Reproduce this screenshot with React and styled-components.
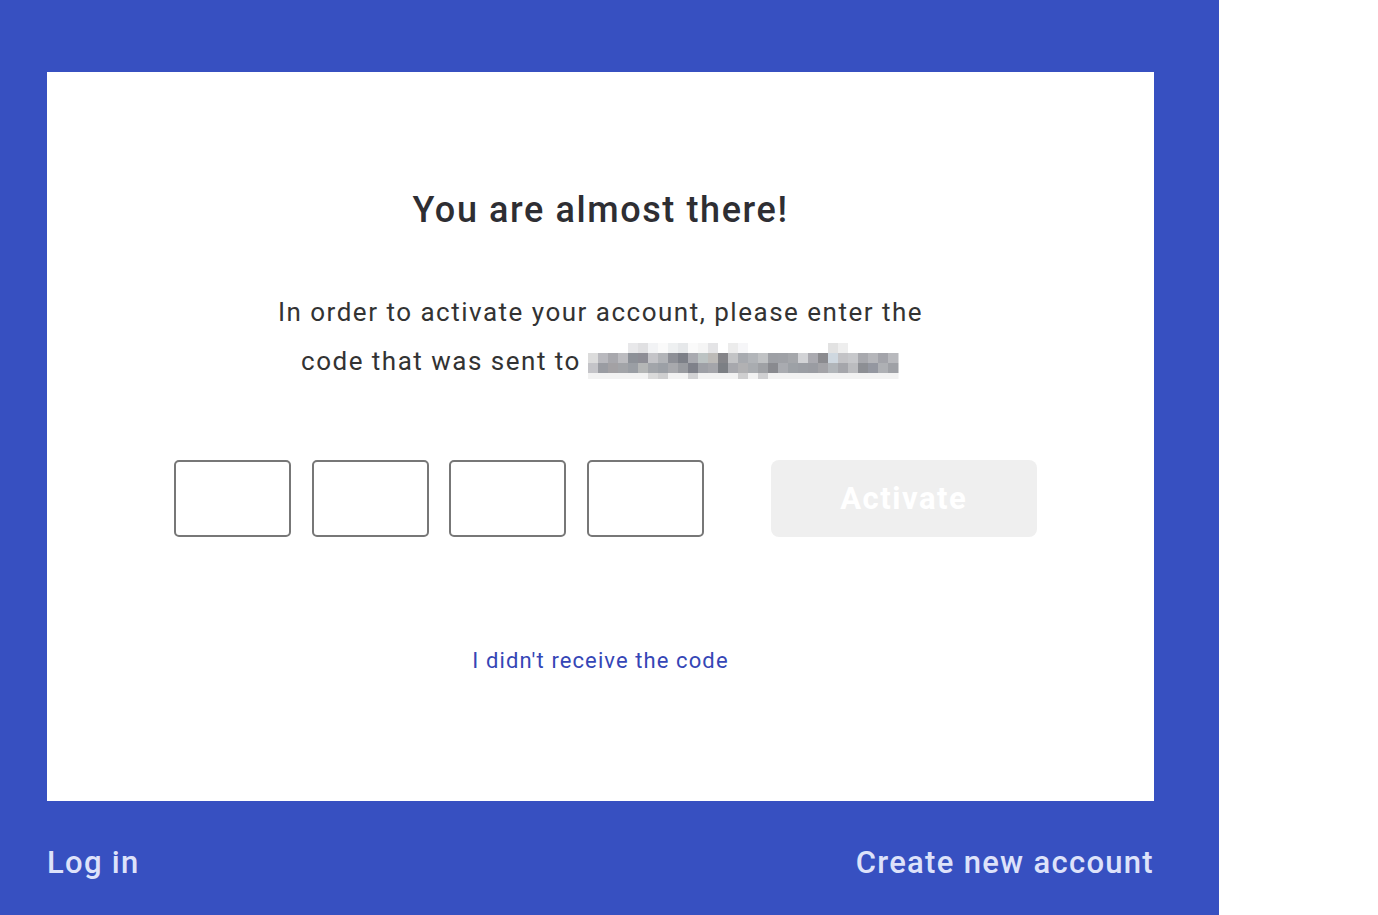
import styled, { createGlobalStyle } from "styled-components";

const GlobalStyle = createGlobalStyle`
  body {
    margin: 0;
    background: #ffffff;
    font-family: Roboto, "Liberation Sans", sans-serif;
  }
`;

const Page = styled.div`
  display: flex;
  width: 100vw;
  height: 100vh;
  background: #ffffff;
`;

const Panel = styled.div`
  width: 1219px;
  height: 915px;
  box-sizing: border-box;
  padding: 72px 65px 0 47px;
  background: #3750c1;
  display: flex;
  flex-direction: column;
`;

const Card = styled.div`
  height: 729px;
  background: #ffffff;
  display: flex;
  flex-direction: column;
  align-items: center;
  padding-top: 117px;
  box-sizing: border-box;
`;

const Title = styled.h1`
  margin: 0;
  font-size: 36px;
  line-height: 42px;
  font-weight: 500;
  letter-spacing: 1.6px;
  color: #2e2e33;
`;

const Text = styled.p`
  margin: 57px 0 0;
  font-size: 26px;
  line-height: 49px;
  letter-spacing: 1.5px;
  color: #333333;
  text-align: center;
`;

const Email = styled.svg`
  display: inline-block;
  vertical-align: -9px;
  margin-left: 7px;
`;

const CodeRow = styled.div`
  display: flex;
  align-items: center;
  margin-top: 74px;
  margin-left: 10px;
`;

const Digit = styled.input`
  width: 117px;
  height: 77px;
  box-sizing: border-box;
  border: 2px solid #777777;
  border-radius: 5px;
  margin-right: ${(p) => (p.$last ? "67px" : "20.5px")};
  background: #ffffff;
  outline: none;
`;

const ActivateButton = styled.button`
  width: 266px;
  height: 77px;
  border: none;
  border-radius: 8px;
  background: #efefef;
  color: #ffffff;
  font-family: Roboto, "Liberation Sans", sans-serif;
  font-size: 31px;
  font-weight: 700;
  letter-spacing: 1.5px;
  cursor: default;
`;

const ResendLink = styled.a`
  margin-top: 111px;
  font-size: 22px;
  line-height: 26px;
  letter-spacing: 1.1px;
  color: #3546b6;
  cursor: pointer;
`;

const Footer = styled.div`
  flex: 1;
  display: flex;
  align-items: center;
  justify-content: space-between;
  padding-top: 8px;
`;

const FooterLink = styled.a`
  font-size: 31px;
  font-weight: 500;
  letter-spacing: 1.3px;
  color: #dde2fa;
  cursor: pointer;
`;

const shades = [
  ["#fff", "#fff", "#fff", "#fff", "#e8e8ea", "#e0e0e2", "#f2f3f5", "#fafafa", "#eef0f1", "#e6e8ea", "#fafafa", "#f5f5f5", "#e4e4e6", "#fff", "#ececec", "#f6f6f8", "#fff", "#fff", "#fff", "#fff", "#fff", "#fff", "#fff", "#fff", "#e2e2e2", "#eeeeee", "#fff", "#fff", "#fff", "#fff", "#fff"],
  ["#dcdcdc", "#b9b9be", "#a8a8ad", "#bcbcc0", "#8d9198", "#8e8e96", "#c4c4c8", "#b2b4b8", "#8e9097", "#7d8088", "#a9aab0", "#bcc3c3", "#bdbbb8", "#858589", "#c3c4c6", "#a8abb0", "#b2b5b9", "#c0c2c4", "#9ea0a5", "#9fa1a6", "#a5a7ab", "#d2d3d6", "#aaaab0", "#8b8b8f", "#cfd8e0", "#c3c3c6", "#c7c8cb", "#a8a9ae", "#b5b6ba", "#a3a4aa", "#b8b9bd"],
  ["#c4c4c8", "#9a9ca2", "#a3a1a4", "#a2a4a8", "#9a9ea4", "#b4b6b6", "#a2a5aa", "#9ca0a6", "#a8a9ad", "#999ba0", "#7f818a", "#9ea0a6", "#a4a5aa", "#7c7f84", "#a7a8ad", "#b1b1b3", "#a9acb0", "#9fa1a5", "#898a8f", "#a9abb0", "#9da1a6", "#9b9ea4", "#9a9ca2", "#a3a3a7", "#b1b5b9", "#a5a6ab", "#bbbcbf", "#8d8f94", "#9497a0", "#aeb0b4", "#9fa1a6"],
  ["#f2f2f2", "#f2f2f2", "#f2f2f2", "#f2f2f2", "#f2f2f2", "#f2f2f2", "#dadada", "#cfcfd0", "#f2f2f2", "#f2f2f2", "#d2d2d4", "#f2f2f2", "#f2f2f2", "#f2f2f2", "#f2f2f2", "#cfcfd0", "#f2f2f2", "#d0d0d2", "#f2f2f2", "#f2f2f2", "#f2f2f2", "#f2f2f2", "#f2f2f2", "#f2f2f2", "#f2f2f2", "#f2f2f2", "#f2f2f2", "#f2f2f2", "#f2f2f2", "#f2f2f2", "#f2f2f2"],
];
const rowY = [0, 10, 20, 30];
const rowH = [10, 10, 10, 6];

const BlurredEmail = () => (
  <Email width="312" height="36" viewBox="0 0 312 36" aria-label="hidden email">
    {shades.map((row, r) =>
      row.map((c, i) => (
        <rect key={`${r}-${i}`} x={i * 10} y={rowY[r]} width="10.5" height={rowH[r]} fill={c} />
      ))
    )}
  </Email>
);

const App = () => {
  return (
    <Page>
      <GlobalStyle />
      <Panel>
        <Card>
          <Title>You are almost there!</Title>
          <Text>
            In order to activate your account, please enter the
            <br />
            code that was sent to
            <BlurredEmail />
          </Text>
          <CodeRow>
            <Digit maxLength={1} />
            <Digit maxLength={1} />
            <Digit maxLength={1} />
            <Digit maxLength={1} $last />
            <ActivateButton disabled>Activate</ActivateButton>
          </CodeRow>
          <ResendLink>I didn't receive the code</ResendLink>
        </Card>
        <Footer>
          <FooterLink>Log in</FooterLink>
          <FooterLink>Create new account</FooterLink>
        </Footer>
      </Panel>
    </Page>
  );
};

export default App;
